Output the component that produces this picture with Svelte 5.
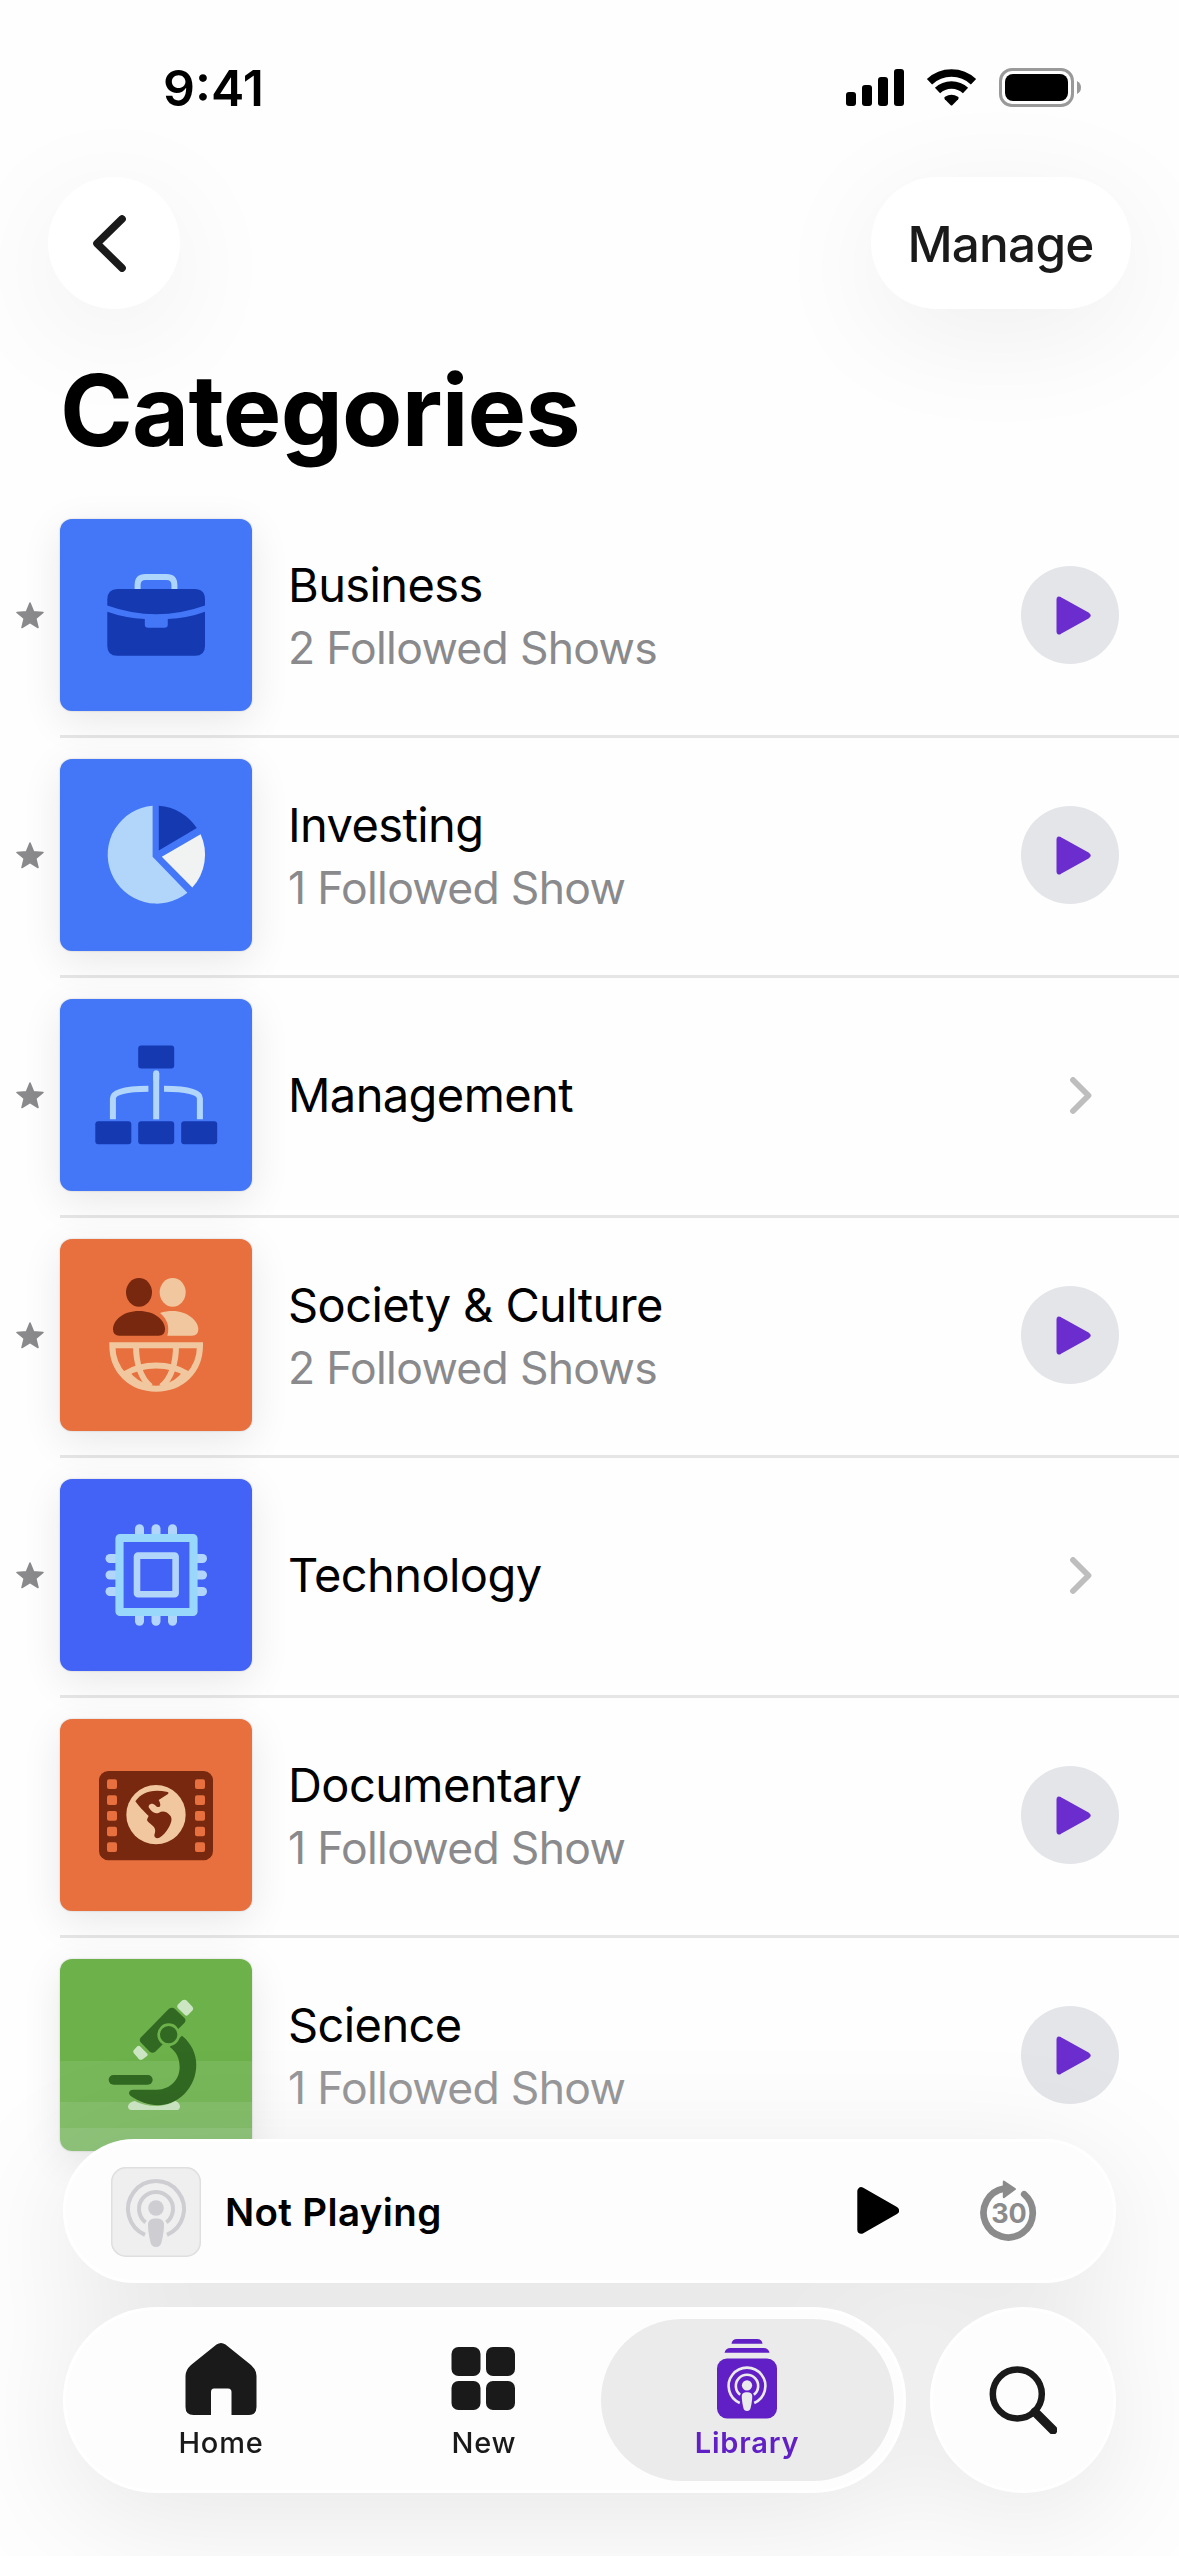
<script lang="ts">
  type Category = {
    name: string;
    shows: number;
    starred: boolean;
    icon: string;
    tone: string;
  };

  const categories: Category[] = [
    { name: 'Business', shows: 2, starred: true, icon: 'briefcase', tone: 'blue' },
    { name: 'Investing', shows: 1, starred: true, icon: 'pie', tone: 'blue' },
    { name: 'Management', shows: 0, starred: true, icon: 'org', tone: 'blue' },
    { name: 'Society & Culture', shows: 2, starred: true, icon: 'society', tone: 'orange' },
    { name: 'Technology', shows: 0, starred: true, icon: 'chip', tone: 'indigo' },
    { name: 'Documentary', shows: 1, starred: false, icon: 'film', tone: 'orange' },
    { name: 'Science', shows: 1, starred: false, icon: 'microscope', tone: 'green' }
  ];

  const pins = [79.5, 96, 112.5];
  const holes = [195, 243, 290, 337, 384];
</script>

{#snippet podcast()}
  <path d="M-11 25.8A28 28 0 1 1 11 25.8" fill="none" stroke="currentColor" stroke-width="4" />
  <path d="M-10.4 13.4A17 17 0 1 1 10.4 13.4" fill="none" stroke="currentColor" stroke-width="4" />
  <circle r="7.8" cy="-1" fill="currentColor" />
  <path d="M-8 16C-8 11-5 9.500 0 9.500S8 11 8 16C8 22 6.500 29 5.600 33C4.800 36.500 3 38 0 38S-4.800 36.500-5.600 33C-6.500 29-8 22-8 16Z" fill="currentColor" />
{/snippet}

{#snippet artwork(icon: string)}
  {#if icon === 'briefcase'}
    <svg viewBox="0 0 192 192">
      <path d="M77.600 71V66Q77.600 58 85.500 58H106.500Q114.400 58 114.400 66V71" fill="none" stroke="#aed5fa" stroke-width="6" />
      <path d="M57.500 70H134.500Q145 70 145 80.500V86.500Q96.200 104 47.300 86.500V80.500Q47.300 70 57.500 70Z" fill="#1439b0" />
      <path d="M47.300 92.700Q65 99 84.800 100V105.500Q84.800 108.800 88 108.800H104.600Q107.800 108.800 107.800 105.500V100Q128 99 145 92.700V127Q145 136.800 135 136.800H57.300Q47.300 136.800 47.300 127Z" fill="#1439b0" />
    </svg>
  {:else if icon === 'pie'}
    <svg viewBox="0 0 192 192">
      <path d="M92.600 46.800A49 49 0 1 0 127.400 133.800L92.600 97.700Z" fill="#b1d6fa" />
      <path d="M98.800 46.800A49 49 0 0 1 136.800 69L98.800 91.500Z" fill="#1439b0" />
      <path d="M140.600 75.300A49 49 0 0 1 132.300 128.600L101.800 97.700Z" fill="#f1f3f3" />
    </svg>
  {:else if icon === 'org'}
    <svg viewBox="0 0 192 192">
      <g fill="#1439b0">
        <rect x="78.200" y="46.500" width="36" height="23" rx="3" />
        <rect x="35.300" y="122.300" width="36" height="23" rx="3" />
        <rect x="78.200" y="122.300" width="36" height="23" rx="3" />
        <rect x="121.200" y="122.300" width="36" height="23" rx="3" />
      </g>
      <g fill="none" stroke="#b1d6fa" stroke-width="6">
        <path d="M96.200 120.300V74" /><path d="M96.200 80V74.200" stroke-linecap="round" />
        <path d="M52.900 120.300V99.500C52.900 93 67 89.800 88.400 89.800" />
        <path d="M139.900 120.300V99.500C139.900 93 125.600 89.800 104 89.800" />
      </g>
    </svg>
  {:else if icon === 'society'}
    <svg viewBox="0 0 576 576">
      <g fill="#f1c79f">
        <ellipse cx="338" cy="160" rx="39" ry="43" />
        <path d="M300 222C313 218 325 216 338 216C382 216 415 246 415 270Q415 290 396 290H322C329 267 324 241 300 222Z" />
      </g>
      <g fill="#77280f">
        <ellipse cx="237" cy="160" rx="39" ry="43" />
        <path d="M178 290Q159 290 159 271C159 243 190 216 237 216S315 243 315 271Q315 290 296 290Z" />
      </g>
      <g fill="none" stroke="#f1c79f" stroke-width="18">
        <path d="M157 319H420C420 396 364 449 288.500 449S157 396 157 319Z" />
        <path d="M228 319C228 370 242 418 272 443" />
        <path d="M348 319C348 370 334 418 304 443" />
        <path d="M196 404C248 371 329 371 381 404" />
        <path d="M205 405C222 427 240 436 262 442" stroke-width="14" />
        <path d="M372 405C355 427 337 436 315 442" stroke-width="14" />
      </g>
    </svg>
  {:else if icon === 'chip'}
    <svg viewBox="0 0 192 192">
      <g stroke="#b1d6fa" stroke-width="9" stroke-linecap="round">
        {#each pins as p}
          <path d="M{p} 49.800V55" /><path d="M{p} 137V142.200" />
          <path d="M50 {p}H55" /><path d="M137 {p}H142.500" />
        {/each}
      </g>
      <rect x="59.500" y="59" width="74" height="74" rx="0.500" fill="#4362f6" stroke="#9ad8fb" stroke-width="8.200" stroke-linejoin="round" />
      <rect x="77" y="76.600" width="38.600" height="38.600" rx="1" fill="none" stroke="#b1d6fa" stroke-width="6.600" />
    </svg>
  {:else if icon === 'film'}
    <svg viewBox="0 0 576 576">
      <rect x="117" y="156" width="342" height="268" rx="28" fill="#77280f" />
      <g fill="#e8703e">
        {#each holes as y}
          <rect x="141" y={y - 14} width="30" height="29" rx="6" />
          <rect x="405" y={y - 14} width="30" height="29" rx="6" />
        {/each}
      </g>
      <circle cx="288" cy="287" r="89" fill="#f1c79f" />
      <path d="M226 247C245 218 279 209 323 219Q328 221 324 225L296 243C302 254 303 262 297 264C288 265 286 255 277 254C268 254 263 261 268 268C276 280 285 286 297 281C309 274 322 279 331 290C337 298 335 309 327 324C318 341 308 350 298 356C290 360 282 355 283 348C288 331 287 327 271 314C258 304 260 303 266 291C259 284 243 270 226 247Z" fill="#77280f" />
    </svg>
  {:else}
    <svg viewBox="0 0 576 576">
      <path d="M366 230C425 277 419 359 373 405C323 454 260 443 212 411Q207 407 207 402Q208 392 220 392H292C330 392 359 362 359 325C359 298 349 278 329 264Z" fill="#316822" />
      <rect x="146" y="348" width="132" height="29" rx="14.500" fill="#316822" />
      <path d="M224 426C264 446 312 446 346 426Q360 432 360 443Q359 453 349 453H214Q204 453 204 442Q206 430 224 426Z" fill="#cce6c4" />
      <path d="M326 150Q336 143 345 150L374 178Q379 185 373 192L285 279Q277 284 270 279L242 250Q236 243 243 235Z" fill="#316822" />
      <path d="M353 137L367 124Q373 120 379 124L398 144Q401 149 398 154L384 168Q379 172 375 168L353 147Q350 142 353 137Z" fill="#cce6c4" />
      <path d="M221 274L232 262Q236 259 240 262L262 284Q265 288 261 291L248 301Q242 304 237 301L221 282Q218 278 221 274Z" fill="#cce6c4" />
      <circle cx="326" cy="227" r="30" fill="#316822" stroke="#6db14b" stroke-width="8" />
    </svg>
  {/if}
{/snippet}

<div class="screen">
  <div class="status">
    <span class="time">9:41</span>
    <div class="indicators">
      <svg class="signal" viewBox="0 0 58 37">
        <rect x="0" y="23" width="10" height="14" rx="3" />
        <rect x="16" y="16" width="10" height="21" rx="3" />
        <rect x="32" y="8" width="10" height="29" rx="3" />
        <rect x="48" y="0" width="10" height="37" rx="3" />
      </svg>
      <svg class="wifi" viewBox="0 0 51 37">
        <path d="M3.500 12.800A32 32 0 0 1 47.500 12.800" fill="none" stroke="#000" stroke-width="7.600" />
        <path d="M11.500 21.500A20.500 20.500 0 0 1 39.500 21.500" fill="none" stroke="#000" stroke-width="7.600" />
        <path d="M18.800 30.200Q17.600 28.800 19 27.800Q25.500 23.500 32 27.800Q33.400 28.800 32.200 30.200L26.500 36Q25.500 37 24.500 36Z" />
      </svg>
      <svg class="battery" viewBox="0 0 82 39">
        <rect x="1.500" y="1.500" width="72" height="36" rx="11.500" fill="none" stroke="#999" stroke-width="3" />
        <rect x="6" y="6" width="63" height="27" rx="8" />
        <path d="M78 13Q82 15 82 19.500T78 26Z" fill="#999" />
      </svg>
    </div>
  </div>

  <nav class="nav">
    <button class="glass back" aria-label="Back">
      <svg viewBox="0 0 34 57"><path d="M30 4L5 28.500L30 53" fill="none" stroke="#1a1a1a" stroke-width="7.600" stroke-linecap="round" stroke-linejoin="round" /></svg>
    </button>
    <button class="glass manage">Manage</button>
  </nav>

  <h1>Categories</h1>

  <ul class="list">
    {#each categories as c}
      <li class="row">
        <div class="gutter">
          {#if c.starred}
            <svg viewBox="0 0 28 27"><path d="M14 1L17.600 9.700L27 10.400L19.800 16.500L22 25.500L14 20.600L6 25.500L8.200 16.500L1 10.400L10.400 9.700Z" fill="#8a8a8d" stroke="#8a8a8d" stroke-width="1.500" stroke-linejoin="round" /></svg>
          {/if}
        </div>
        <div class="body">
          <div class="tile {c.tone}">{@render artwork(c.icon)}</div>
          <div class="text" class:two={c.shows > 0}>
            <span class="name">{c.name}</span>
            {#if c.shows > 0}
              <span class="sub">{c.shows} Followed {c.shows === 1 ? 'Show' : 'Shows'}</span>
            {/if}
          </div>
          {#if c.shows > 0}
            <button class="play" aria-label="Play {c.name}">
              <svg viewBox="0 0 36 41"><path d="M1.500 4.500V36.500Q1.500 39.500 4.500 38L32.500 22.300Q35 20.500 32.500 18.700L4.500 3Q1.500 1.500 1.500 4.500Z" fill="#6b2dce" stroke="#6b2dce" stroke-width="2" stroke-linejoin="round" /></svg>
            </button>
          {:else}
            <svg class="chevron" viewBox="0 0 22 37"><path d="M3 3L18.500 18.500L3 34" fill="none" stroke="#bebebf" stroke-width="5.800" stroke-linecap="round" stroke-linejoin="round" /></svg>
          {/if}
        </div>
      </li>
    {/each}
  </ul>

  <div class="dock">
    <div class="player">
      <div class="cover">
        <svg viewBox="0 0 90 90"><g transform="translate(45 42)">{@render podcast()}</g></svg>
      </div>
      <span class="track">Not Playing</span>
      <svg class="resume" viewBox="0 0 42 47"><path d="M4.300 4.300V42.700L38 23.500Z" stroke="#000" stroke-width="8" stroke-linejoin="round" /></svg>
      <svg class="skip" viewBox="0 0 60 66">
        <path d="M45.200 16.200A24.600 24.600 0 1 1 25 10.600" fill="none" stroke="#8b8b8c" stroke-width="6.700" stroke-linecap="round" />
        <path d="M24.800 3.600V19.200L36 11Z" fill="#8b8b8c" stroke="#8b8b8c" stroke-width="2" stroke-linejoin="round" />
        <text x="30" y="44.500" text-anchor="middle">30</text>
      </svg>
    </div>
    <div class="bars">
      <div class="tabs">
        <button class="tab">
          <svg viewBox="0 0 90 90"><path d="M40.500 7.500Q45 4.500 49.500 7.500L75 28Q80.500 33 80.500 39V70Q80.500 78 72.500 78H55.500V55Q55.500 51.500 52 51.500H38Q35 51.500 35 55V78H17.500Q9.500 78 9.500 70V39Q9.500 33 15 28Z" /></svg>
          <span>Home</span>
        </button>
        <button class="tab">
          <svg viewBox="0 0 90 90">
            <rect x="12.500" y="10" width="29" height="29" rx="7" /><rect x="47" y="10" width="29" height="29" rx="7" />
            <rect x="12.500" y="44" width="29" height="29" rx="7" /><rect x="47" y="44" width="29" height="29" rx="7" />
          </svg>
          <span>New</span>
        </button>
        <button class="tab active">
          <svg viewBox="0 0 90 90">
            <path d="M29.500 6.700Q30 2 35 2H55Q60 2 60.500 6.700Z" /><path d="M22.500 15.800Q23.500 11 28.500 11H61.500Q66.500 11 67.500 15.800Z" />
            <rect x="15" y="21.500" width="60" height="60" rx="10" />
            <g class="cutout" transform="translate(45 49) scale(.657)">{@render podcast()}</g>
          </svg>
          <span>Library</span>
        </button>
      </div>
      <button class="search" aria-label="Search">
        <svg viewBox="0 0 68 68"><circle cx="28.300" cy="28" r="24.500" fill="none" stroke="#1a1a1a" stroke-width="6.500" /><path d="M46 46L64 64" stroke="#1a1a1a" stroke-width="9" stroke-linecap="round" /></svg>
      </button>
    </div>
  </div>
</div>

<style>
  :global(body) { margin: 0; background: #fefefe; }
  svg { display: block; flex: none; }
  button { border: 0; padding: 0; margin: 0; font: inherit; color: inherit; background: none; }

  .screen {
    position: relative;
    width: 1179px;
    height: 2556px;
    overflow: hidden;
    box-sizing: border-box;
    background: #fefefe;
    color: #000;
    font-family: Inter, 'Liberation Sans', sans-serif;
  }

  .status {
    position: relative;
    z-index: 1;
    display: flex;
    align-items: center;
    justify-content: space-between;
    height: 51px;
    padding: 62px 98px 64px 163px;
  }
  .time { padding-top: 1px; font-size: 50px; line-height: 51px; font-weight: 600; letter-spacing: 0; }
  .indicators { display: flex; align-items: center; }
  .signal { width: 58px; height: 37px; margin-right: 22px; }
  .wifi { width: 51px; height: 37px; margin-right: 22px; }
  .battery { width: 82px; height: 39px; }

  .nav { display: flex; justify-content: space-between; padding: 0 48px; }
  .glass {
    height: 132px;
    border-radius: 66px;
    background: #fff;
    box-shadow: 0 24px 120px rgba(0, 0, 0, 0.065);
    display: flex;
    align-items: center;
    justify-content: center;
    color: #1a1a1a;
  }
  .back { width: 132px; }
  .back svg { width: 34px; height: 57px; margin-right: 10px; }
  .manage { width: 260px; padding: 2px 1px 0 0; box-sizing: border-box; font-size: 49.5px; font-weight: 500; letter-spacing: -0.8px; }

  h1 {
    position: relative;
    margin: 42px 0 27px 60px;
    font-size: 98.5px;
    line-height: 120px;
    font-weight: 700;
    letter-spacing: -0.8px;
  }

  .list { margin: 0; padding: 0; list-style: none; }
  .row { display: flex; height: 240px; }
  .gutter { display: flex; align-items: center; width: 44px; padding: 0 0 6px 16px; box-sizing: border-box; margin-right: 16px; }
  .gutter svg { width: 28px; height: 27px; }
  .body {
    flex: 1;
    display: flex;
    align-items: center;
    box-sizing: border-box;
    height: 240px;
    padding: 0 60px 3px 0;
    border-bottom: 3px solid #e6e6e6;
  }
  .row:last-child .body { border-color: transparent; }
  .tile {
    width: 192px;
    height: 192px;
    border-radius: 12px;
    box-shadow: 0 10px 40px rgba(0, 0, 0, 0.09), 0 0 2px rgba(0, 0, 0, 0.2);
  }
  .tile svg { width: 192px; height: 192px; }
  .blue { background: #4377f8; }
  .indigo { background: #4362f6; }
  .orange { background: #e8703e; }
  .green { background: linear-gradient(#6db14b 53%, #78b75a 53% 74.300%, #84be6a 74.300% 88%, #8fc47a 88%); }
  .text { flex: 1; display: flex; flex-direction: column; padding: 0 0 1px 36px; }
  .two { padding: 3px 0 0 36px; }
  .name { font-size: 47px; line-height: 63px; letter-spacing: -0.6px; }
  .sub { font-size: 44.5px; line-height: 64px; letter-spacing: -0.7px; color: #8a8a8d; }
  .row:last-child .sub { color: #98989a; }
  .play {
    display: flex;
    align-items: center;
    justify-content: center;
    width: 98px;
    height: 98px;
    border-radius: 50%;
    background: #e4e5e9;
  }
  .play svg { width: 36px; height: 41px; margin-left: 7px; }
  .chevron { width: 22px; height: 37px; margin-right: 27px; }

  /* One shadow for the whole group keeps the bars from shading each other. */
  .dock {
    position: absolute;
    inset: auto 0 0 0;
    height: 596px;
    box-sizing: border-box;
    padding: 179px 63px 63px;
    display: flex;
    flex-direction: column;
    gap: 24px;
    filter: drop-shadow(0 24px 60px rgba(0, 0, 0, 0.095));
  }
  .player, .tabs, .search {
    box-sizing: border-box;
    background: #fdfdfd;
    border: 3px solid #fff;
  }
  .player {
    display: flex;
    align-items: center;
    flex: none;
    height: 144px;
    border-radius: 72px;
    padding: 2px 74px 0 45px;
  }
  .cover {
    width: 90px;
    height: 90px;
    border-radius: 15px;
    background: #efefef;
    box-shadow: inset 0 0 0 1.500px #dfdfe0;
    color: #cdcdd2;
  }
  .track { flex: 1; padding-left: 24px; font-size: 38.5px; font-weight: 600; letter-spacing: 0.35px; }
  .resume { width: 42px; height: 47px; margin: 0 80px 3px 0; }
  .skip { width: 60px; height: 66px; margin-bottom: 3px; }
  .skip text { font-size: 27px; font-weight: 700; fill: #8b8b8c; }

  .bars { display: flex; justify-content: space-between; flex: none; height: 186px; }
  .tabs { display: flex; width: 843px; box-sizing: border-box; border-radius: 93px; padding: 9px; }
  .tab {
    flex: none;
    display: flex;
    flex-direction: column;
    align-items: center;
    justify-content: flex-start;
    box-sizing: border-box;
    width: 293px;
    height: 162px;
    padding: 18px 1px 0 0;
    border-radius: 81px;
    color: #1a1a1a;
    fill: #1a1a1a;
    font-size: 29px;
    line-height: 31px;
    font-weight: 500;
    letter-spacing: 0.8px;
  }
  .tab + .tab { margin-left: -30px; }
  .tab svg { width: 90px; height: 90px; }
  .active { background: #ebebeb; color: #611fc6; fill: #611fc6; font-weight: 600; }
  .cutout { color: #ebebeb; }
  .search { display: flex; align-items: center; justify-content: center; width: 186px; border-radius: 93px; }
  .search svg { width: 68px; height: 68px; }
</style>
